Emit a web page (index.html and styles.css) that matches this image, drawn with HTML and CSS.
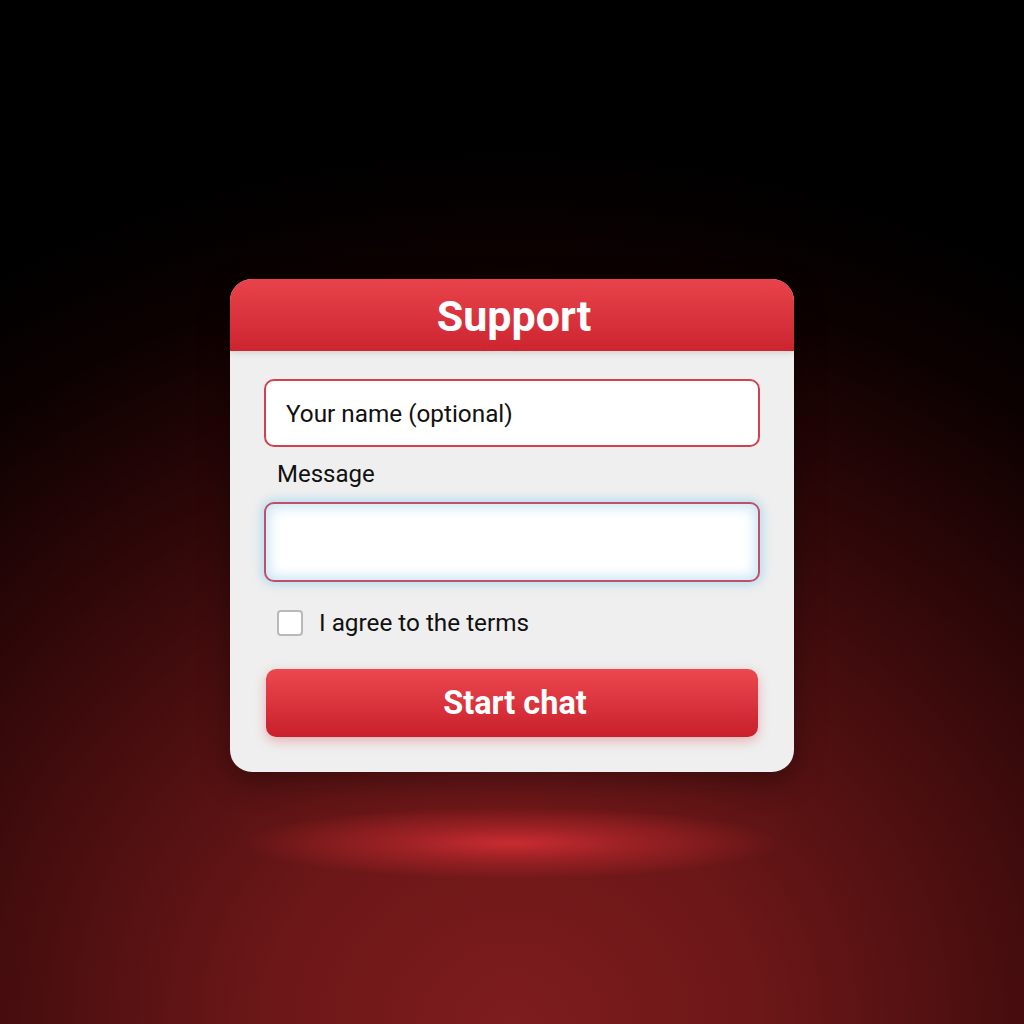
FILE: index.html
```html
<!DOCTYPE html>
<html lang="en">
<head>
<meta charset="utf-8">
<title>Support</title>
<link rel="stylesheet" href="styles.css">
</head>
<body>
<main class="stage">
  <section class="card">
    <header class="card-header"><h1 class="title">Support</h1></header>
    <form class="card-body">
      <div class="field name-field">Your name (optional)</div>
      <label class="label">Message</label>
      <div class="field message-field"></div>
      <label class="check-row"><span class="checkbox"></span><span class="check-text">I agree to the terms</span></label>
      <button type="button" class="btn">Start chat</button>
    </form>
  </section>
</main>
</body>
</html>
```
FILE: styles.css
```css
html, body { margin: 0; padding: 0; }
body {
  width: 1024px;
  height: 1024px;
  overflow: hidden;
  font-family: Roboto, "Liberation Sans", sans-serif;
  background:
    radial-gradient(ellipse 270px 36px at 512px 843px, rgba(205,45,50,0.95) 0%, rgba(190,40,45,0.55) 45%, rgba(160,30,35,0) 100%),
    radial-gradient(ellipse 1000px 880px at 512px 1024px, #7e1c1e 0%, #6c1718 25%, #4a0e0f 48%, #2a0607 68%, #0c0101 86%, #000 100%),
    #000;
}
.stage {
  display: flex;
  justify-content: center;
  padding-top: 279px;
}
.card {
  width: 564px;
  border-radius: 22px;
  background: #efefef;
  overflow: hidden;
  box-shadow: 0 10px 30px rgba(0,0,0,0.35);
}
.card-header {
  height: 72px;
  background: linear-gradient(#e8434b, #cc2530);
  display: flex;
  align-items: center;
  justify-content: center;
  box-shadow: 0 2px 6px rgba(0,0,0,0.12);
  position: relative;
}
.title {
  margin: 0 0 0 4px;
  color: #fff;
  font-size: 43px;
  font-weight: 700;
  line-height: 1;
  padding-top: 2px;
}
.card-body {
  padding: 28px 34px 35px 34px;
  display: flex;
  flex-direction: column;
}
.field {
  box-sizing: border-box;
  width: 496px;
  background: #fff;
  border: 2px solid #d4404e;
  border-radius: 10px;
}
.name-field {
  height: 68px;
  display: flex;
  align-items: center;
  padding-left: 20px;
  font-size: 24.3px;
  color: #111;
}
.label {
  margin: 13px 0 0 13px;
  font-size: 24px;
  color: #111;
  line-height: 28px;
}
.message-field {
  margin-top: 14px;
  height: 80px;
  border-color: #c0506a;
  box-shadow: 0 0 10px 3px rgba(150,210,240,0.6), inset 0 0 12px 4px rgba(170,215,240,0.6);
}
.check-row {
  display: flex;
  align-items: center;
  margin: 26px 0 0 13px;
  gap: 16px;
}
.checkbox {
  box-sizing: border-box;
  width: 26px;
  height: 26px;
  border: 2px solid #b9b9b9;
  border-radius: 4px;
  background: #fff;
}
.check-text {
  font-size: 24.3px;
  color: #111;
}
.btn {
  margin: 32px 0 0 2px;
  width: 492px;
  height: 68px;
  border: 0;
  border-radius: 10px;
  background: linear-gradient(#ec4850, #c9202b);
  color: #fff;
  font-family: Roboto, "Liberation Sans", sans-serif;
  font-size: 32.5px;
  font-weight: 700;
  padding: 0 0 0 6px;
  box-shadow: 0 4px 12px rgba(220,60,70,0.35);
}
```
